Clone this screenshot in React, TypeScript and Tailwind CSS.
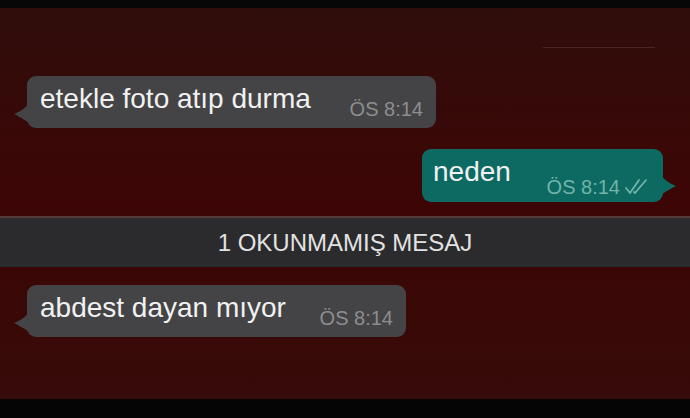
import React from "react";

const font = { fontFamily: '"Liberation Sans", Arial, sans-serif' };

function TailLeft() {
  return (
    <svg
      className="absolute left-[-14px] bottom-[3px]"
      width="16"
      height="22"
      viewBox="0 0 16 22"
    >
      <path d="M16 0 C 12 6, 6 9, 1 11 C 5 13, 9 15, 16 20 Z" fill="#444446" />
    </svg>
  );
}

function TailRight() {
  return (
    <svg
      className="absolute right-[-14px] bottom-[5px]"
      width="16"
      height="22"
      viewBox="0 0 16 22"
    >
      <path d="M0 0 C 4 6, 10 9, 15 11 C 11 13, 7 15, 0 20 Z" fill="#0d6a62" />
    </svg>
  );
}

function Incoming({ text, time, width }: { text: string; time: string; width: string }) {
  return (
    <div className={`relative ml-[27px] h-[52px] ${width} rounded-[9px] bg-[#444446] pl-[13px] pr-[13px] pt-[7px] flex justify-between`}>
      <TailLeft />
      <span className="text-[28px] leading-[32px] text-[#f1f1f1]">{text}</span>
      <span className="mt-[15px] text-[20px] leading-[22px] text-[#8d8d90]">{time}</span>
    </div>
  );
}

function DoubleCheck() {
  return (
    <svg width="26" height="18" viewBox="0 0 26 18" fill="none" stroke="#72b3aa" strokeWidth="1.8" strokeLinecap="round" strokeLinejoin="round">
      <path d="M2 10 L6 15 L15 2" />
      <path d="M10 14 L11 15 L22 2" />
    </svg>
  );
}

export default function App() {
  return (
    <div className="w-[690px] h-[418px] flex flex-col bg-black overflow-hidden" style={font}>
      <div className="h-[8px] bg-[#070707]" />
      <div className="h-[391px] flex flex-col bg-gradient-to-b from-[#2f0d0b] via-[#3d0505] to-[#360b09]">
        <div className="h-[39px]" />
        <div className="ml-[543px] w-[112px] h-[1px] bg-[#4d2222]" />
        <div className="h-[28px]" />
        <Incoming text="etekle foto atıp durma" time="ÖS 8:14" width="w-[409px]" />
        <div className="h-[21px]" />
        <div className="relative ml-[422px] w-[241px] h-[53px] rounded-[9px] bg-[#0d6a62] pl-[11px] pr-[13px] pt-[7px] flex justify-between">
          <TailRight />
          <span className="text-[28px] leading-[32px] text-[#f1f1f1]">neden</span>
          <span className="mt-[15px] flex items-center gap-[4px] text-[20px] leading-[22px] text-[#72b3aa]">
            ÖS 8:14
            <DoubleCheck />
          </span>
        </div>
        <div className="h-[14px]" />
        <div className="h-[51px] border-t-2 border-[#553a3a] bg-[#2b2b2d] flex items-center justify-center">
          <span className="text-[24px] leading-[28px] text-[#e2e2e2]">1 OKUNMAMIŞ MESAJ</span>
        </div>
        <div className="h-[18px]" />
        <Incoming text="abdest dayan mıyor" time="ÖS 8:14" width="w-[379px]" />
      </div>
      <div className="flex-1 bg-[#050505]" />
    </div>
  );
}
